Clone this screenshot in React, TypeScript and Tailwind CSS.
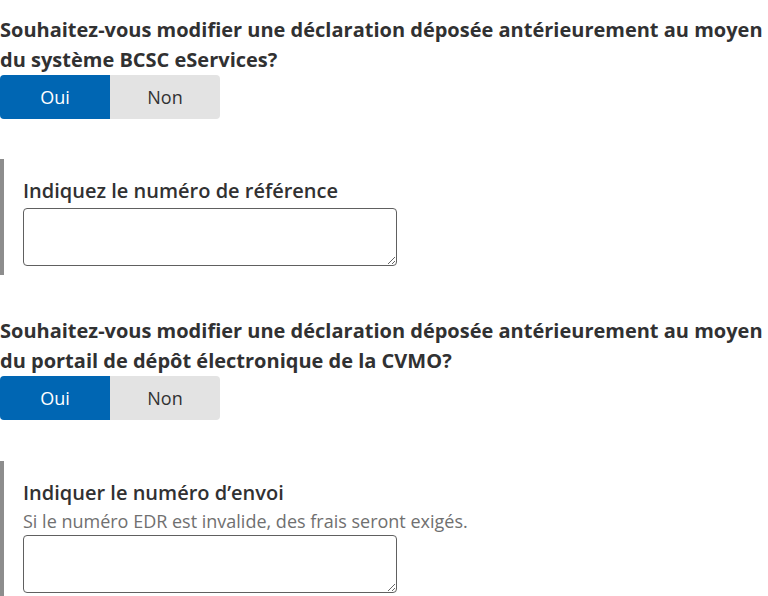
import React from "react";

const Toggle = () => (
  <div className="flex">
    <button className="w-[110px] h-[44px] bg-[#0066b3] text-white text-[18px] rounded-l-[4px]">
      Oui
    </button>
    <button className="w-[110px] h-[44px] bg-[#e3e3e3] text-[#313132] text-[18px] rounded-r-[4px]">
      Non
    </button>
  </div>
);

const Question = ({ text }: { text: React.ReactNode }) => (
  <h2 className="text-[20px] leading-[30px] font-bold text-[#313132]">{text}</h2>
);

const Field = ({ label, hint }: { label: string; hint?: string }) => (
  <div className="border-l-4 border-[#8d8d8d] pl-[19px] pt-[18px] pb-[9px]">
    <label className="block text-[20px] leading-[28px] font-semibold text-[#313132]">{label}</label>
    {hint && <p className="text-[18px] leading-[28px] text-[#707070]">{hint}</p>}
    <textarea
      className={
        hint
          ? "block w-[374px] h-[58px] border border-[#606060] rounded-[4px] bg-white"
          : "block mt-[3px] w-[374px] h-[58px] border border-[#606060] rounded-[4px] bg-white"
      }
    />
  </div>
);

export default function App() {
  return (
    <div
      className="w-[768px] h-[596px] overflow-hidden bg-white"
      style={{ fontFamily: '"Open Sans", "Noto Sans", sans-serif' }}
    >
      <div className="pt-[15px]">
        <Question
          text={
            <>
              Souhaitez-vous modifier une déclaration déposée antérieurement au moyen
              <br />
              du système BCSC eServices?
            </>
          }
        />
        <Toggle />
      </div>
      <div className="mt-[40px]">
        <Field label="Indiquez le numéro de référence" />
      </div>
      <div className="mt-[41px]">
        <Question
          text={
            <>
              Souhaitez-vous modifier une déclaration déposée antérieurement au moyen
              <br />
              du portail de dépôt électronique de la CVMO?
            </>
          }
        />
        <Toggle />
      </div>
      <div className="mt-[41px]">
        <Field
          label="Indiquer le numéro d’envoi"
          hint="Si le numéro EDR est invalide, des frais seront exigés."
        />
      </div>
    </div>
  );
}
